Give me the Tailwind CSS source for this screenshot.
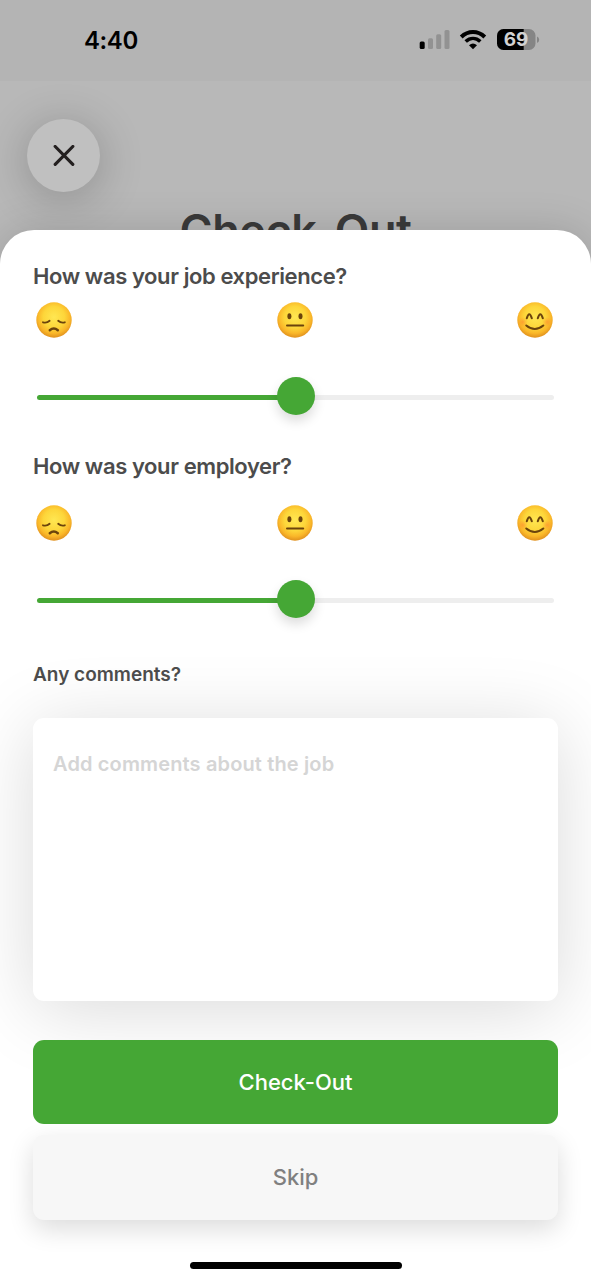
<!DOCTYPE html>
<html lang="en">
<head>
<meta charset="utf-8">
<title>Check-Out</title>
<script src="https://cdn.jsdelivr.net/npm/@tailwindcss/browser@4"></script>
</head>
<body class="bg-[#b8b8b8] font-['Inter',sans-serif]">
<svg width="0" height="0" class="absolute" aria-hidden="true">
  <defs>
    <radialGradient id="face" cx=".5" cy=".42" r=".6">
      <stop offset="0" stop-color="#ffe752"/><stop offset=".5" stop-color="#fdd63a"/><stop offset=".76" stop-color="#fab729"/><stop offset="1" stop-color="#dc8a1c"/>
    </radialGradient>
    <radialGradient id="blush"><stop offset="0" stop-color="#ff7a2e" stop-opacity=".5"/><stop offset="1" stop-color="#ff8a2e" stop-opacity="0"/></radialGradient>
    <symbol id="sad" viewBox="0 0 36 36">
      <circle cx="18" cy="18" r="17.7" fill="url(#face)"/>
      <g fill="none" stroke="#6b430c" stroke-width="1.9" stroke-linecap="round"><path d="M7 20.300q3.800 1 6.600-1.500M28.800 20.300q-3.800 1-6.600-1.500"/><path d="M13.800 28.200q4-3.400 8 0" stroke-width="2.500"/></g>
    </symbol>
    <symbol id="neutral" viewBox="0 0 36 36">
      <circle cx="18" cy="18" r="17.7" fill="url(#face)"/>
      <g fill="#6b430c"><ellipse cx="12.400" cy="14.200" rx="2" ry="3"/><ellipse cx="23.500" cy="14.200" rx="2" ry="3"/><rect x="9" y="22.500" width="18.200" height="2" rx="1"/></g>
    </symbol>
    <symbol id="happy" viewBox="0 0 36 36">
      <circle cx="18" cy="18" r="17.700" fill="url(#face)"/>
      <circle cx="5.800" cy="20" r="5" fill="url(#blush)"/><circle cx="30.200" cy="20" r="5" fill="url(#blush)"/>
      <g fill="none" stroke="#6b430c" stroke-width="2.100" stroke-linecap="round"><path d="M9.800 16.200q2.500-8 5 0M20.800 16.200q2.500-8 5 0M9.300 23.500q8.500 7 17 0"/></g>
    </symbol>
  </defs>
</svg>
<div class="flex h-[1280px] w-[591px] flex-col overflow-hidden">
  <header class="flex h-[81px] shrink-0 items-start justify-between bg-[#b4b4b4] pl-[84px] pr-[51px]">
    <span class="mt-[26px] text-[24px] leading-[30px] font-semibold tracking-[-0.4px] text-black">4:40</span>
    <svg class="mt-[26px]" width="122" height="28" viewBox="418 26 122 28">
      <rect x="419.700" y="41.500" width="5" height="7.500" rx="1.500"/>
      <g fill="#929292"><rect x="428" y="38.300" width="5" height="10.700" rx="1.500"/><rect x="436.200" y="34.200" width="5" height="14.800" rx="1.500"/><rect x="444.500" y="30" width="5" height="19" rx="1.500"/></g>
      <g fill="none" stroke="#000" stroke-width="4"><path d="M461.200 37c6.900-6.600 16.700-6.600 23.600 0"/><path d="M465.700 41.500c4.400-4 10.200-4 14.600 0" stroke-width="3.600"/></g>
      <path d="M469 45.200q4-3.400 8 0l-4 4z"/>
      <clipPath id="batt"><rect x="497" y="29" width="38.500" height="21" rx="6.500"/></clipPath>
      <g clip-path="url(#batt)"><rect x="497" y="29" width="39" height="21" fill="#858585"/><rect x="497" y="29" width="26.700" height="21"/></g>
      <path d="M537 36.500q2.200 1 2.200 3.200t-2.200 3.200z" fill="#858585"/>
      <text x="516" y="46.300" text-anchor="middle" font-size="19" font-weight="700" fill="#d2d2d2">69</text>
    </svg>
  </header>
  <div class="h-[149px] shrink-0 px-[27px] pt-[38px]">
    <button class="flex size-[73px] items-center justify-center rounded-full bg-[#c0c0c0] shadow-[0_6px_45px_rgba(0,0,0,0.24)]" aria-label="Close">
      <svg width="22" height="22" viewBox="0 0 22 22" fill="none" stroke="#231f1f" stroke-width="3.200" stroke-linecap="round"><path d="M2.200 1.500l17.600 17.800M19.800 1.500L2.200 19.300"/></svg>
    </button>
    <h1 class="mt-[10px] text-center text-[45px] leading-[58px] font-semibold tracking-[-0.4px] whitespace-nowrap text-[#3a3a3a]">Check-Out</h1>
  </div>
  <main class="relative flex h-[1050px] shrink-0 flex-col rounded-t-[34px] bg-white px-[33px] pt-[33px] shadow-[0_0_40px_rgba(0,0,0,0.15)]">
    <h2 class="h-[28px] text-[22px] leading-[27px] font-semibold tracking-[-0.4px] whitespace-nowrap text-[#4c4c4c]">How was your job experience?</h2>
    <div class="mt-[11px] flex justify-between pr-[5px] pl-[3px]">
      <svg class="size-9"><use href="#sad"/></svg><svg class="size-9"><use href="#neutral"/></svg><svg class="size-9"><use href="#happy"/></svg>
    </div>
    <div class="mt-[39px] flex h-[38px] items-center px-1">
      <div class="mt-[3px] h-[5px] w-[250px] rounded-l-full bg-[#45a735]"></div>
      <div class="z-10 -mx-[10px] size-[38px] shrink-0 rounded-full bg-[#45a735] shadow-[0_6px_12px_rgba(0,0,0,0.14)]"></div>
      <div class="mt-[3px] h-[5px] flex-1 rounded-r-full bg-[#eeeeee]"></div>
    </div>
    <h2 class="mt-[37px] h-[28px] text-[22px] leading-[28px] font-semibold tracking-[-0.4px] whitespace-nowrap text-[#4c4c4c]">How was your employer?</h2>
    <div class="mt-[25px] flex justify-between pr-[5px] pl-[3px]">
      <svg class="size-9"><use href="#sad"/></svg><svg class="size-9"><use href="#neutral"/></svg><svg class="size-9"><use href="#happy"/></svg>
    </div>
    <div class="mt-[39px] flex h-[38px] items-center px-1">
      <div class="mt-[3px] h-[5px] w-[250px] rounded-l-full bg-[#45a735]"></div>
      <div class="z-10 -mx-[10px] size-[38px] shrink-0 rounded-full bg-[#45a735] shadow-[0_6px_12px_rgba(0,0,0,0.14)]"></div>
      <div class="mt-[3px] h-[5px] flex-1 rounded-r-full bg-[#eeeeee]"></div>
    </div>
    <h3 class="z-10 mt-[44px] h-[26px] text-[19px] leading-[26px] font-semibold whitespace-nowrap text-[#4c4c4c]">Any comments?</h3>
    <div class="mt-[30px] h-[283px] shrink-0 rounded-[11px] bg-white px-5 pt-[33px] text-[20px] leading-[26px] font-semibold tracking-[0.14px] text-[#d5d5d5] shadow-[0_9px_75px_rgba(0,0,0,0.15)]">Add comments about the job</div>
    <button class="z-10 mt-[39px] h-[84px] shrink-0 rounded-[11px] bg-[#45a735] text-[22px] font-medium text-white">Check-Out</button>
    <button class="mt-[11px] h-[85px] shrink-0 rounded-[11px] bg-[#f7f7f7] text-[22px] font-medium text-[#808080] shadow-[0_9px_26px_rgba(0,0,0,0.14)]">Skip</button>
    <div class="mx-auto mt-[42px] h-[7px] w-[212px] shrink-0 rounded-full bg-black"></div>
  </main>
</div>
</body>
</html>
